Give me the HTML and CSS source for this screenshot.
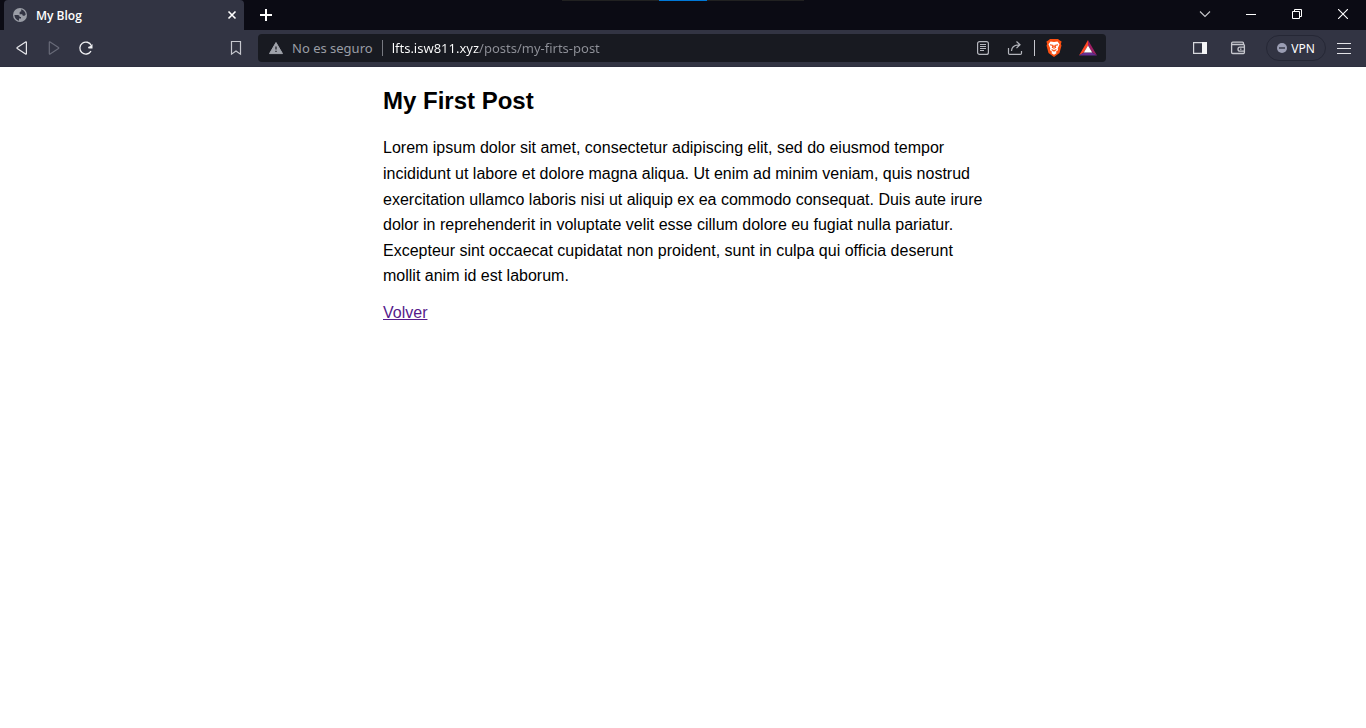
FILE: index.html
```html
<!DOCTYPE html>
<html lang="es">
<head>
<meta charset="utf-8">
<title>My Blog</title>
<link rel="stylesheet" href="styles.css">
</head>
<body>
<header class="browser">
  <div class="grip"><span class="grip-mark"></span></div>
  <div class="tabstrip">
    <div class="tab">
      <svg class="icon" width="16" height="16" viewBox="0 0 16 16"><circle cx="8" cy="8" r="7" fill="#9a9da6"/><path d="M2.400 8h3.400c1.300 0 1.900.8 1.900 1.900H9v1.600H7v2.300C4.500 13.300 2.500 11 2.400 8ZM9.200 2.300c2.500.6 4.300 2.700 4.500 5.300-.5.900-1.100 1.200-1.900 1.200-1 0-1.500-.6-1.500-1.600H7.600V5.700c0-.9.500-1.300 1.600-1.300Z" fill="#323443"/></svg>
      <span class="tab-title">My Blog</span>
      <button class="tab-close" aria-label="Cerrar pestaña"><svg width="10" height="10" viewBox="0 0 10 10"><path d="m1.500 1.500 7 7m0-7-7 7" stroke="#fff" stroke-width="1.600"/></svg></button>
    </div>
    <button class="new-tab" aria-label="Nueva pestaña"><svg width="12" height="12" viewBox="0 0 12 12"><path d="M6 0v12M0 6h12" stroke="#fff" stroke-width="2"/></svg></button>
    <div class="window-buttons">
      <button class="win" aria-label="Buscar pestañas"><svg width="12" height="12" viewBox="0 0 12 12"><path d="m1 3.500 5 5 5-5" fill="none" stroke="#c9c9cd" stroke-width="1.100"/></svg></button>
      <button class="win" aria-label="Minimizar"><svg width="10" height="10" viewBox="0 0 10 10"><path d="M0 5.500h10" stroke="#fff"/></svg></button>
      <button class="win" aria-label="Restaurar"><svg width="10" height="10" viewBox="0 0 10 10"><path d="M.5 2.500h7v7h-7zM2.500 2.500v-2h7v7h-2" fill="none" stroke="#fff"/></svg></button>
      <button class="win" aria-label="Cerrar"><svg width="10" height="10" viewBox="0 0 10 10"><path d="m0 0 10 10M10 0 0 10" stroke="#fff" stroke-width="1.100"/></svg></button>
    </div>
  </div>
  <div class="toolbar">
    <div class="nav">
      <button class="tool" aria-label="Atrás"><svg width="16" height="16" viewBox="0 0 16 16"><path d="M12.400 2.300v11.400c0 .4-.5.600-.8.400L3.200 8.500a.6.600 0 0 1 0-1l8.400-5.600c.3-.2.800 0 .8.400Z" fill="none" stroke="#e6e6ea" stroke-width="1.200"/></svg></button>
      <button class="tool" aria-label="Adelante"><svg width="16" height="16" viewBox="0 0 16 16"><path d="M3.300 2.300v11.400c0 .4.500.6.800.4l8.400-5.600a.6.600 0 0 0 0-1L4.100 1.900c-.3-.2-.8 0-.8.4Z" fill="none" stroke="#686a78" stroke-width="1.200"/></svg></button>
      <button class="tool" aria-label="Recargar"><svg width="16" height="16" viewBox="0 0 16 16"><path d="M13 11.200A6 6 0 1 1 13.300 5.500" fill="none" stroke="#f0f0f3" stroke-width="1.300"/><path d="M14.500 4v4.600h-4L10 7l2.400-1Z" fill="#f0f0f3"/></svg></button>
      <button class="tool bookmark" aria-label="Añadir a marcadores"><svg width="16" height="16" viewBox="0 0 16 16"><path d="M3.500 1.500h9v12.700L8 11l-4.500 3.200Z" fill="none" stroke="#c6c7ce" stroke-width="1.200"/></svg></button>
    </div>
    <div class="address">
      <svg class="icon" width="14" height="14" viewBox="0 0 14 14"><path d="M7 1.500 13.500 12.600H.5Z" fill="#a0a3ab" stroke="#a0a3ab" stroke-linejoin="round"/><path d="M7 5.500v3M7 9.800v1.300" stroke="#181a21" stroke-width="1.200"/></svg>
      <label class="security" for="url">No es seguro</label>
      <span class="divider"></span>
      <input class="url" id="url" type="text" value="lfts.isw811.xyz/posts/my-firts-post" spellcheck="false">
      <button class="tool" aria-label="Modo de lectura"><svg width="16" height="16" viewBox="0 0 16 16"><rect x="2.600" y="1.600" width="10.800" height="12.800" rx="2" fill="none" stroke="#b4b6bd" stroke-width="1.200"/><path d="M5 4.500h6M5 6.500h6M5 8.500h6M5 10.500h4" stroke="#b4b6bd"/></svg></button>
      <button class="tool" aria-label="Compartir"><svg width="16" height="16" viewBox="0 0 16 16"><path d="M1.500 8v5.200c0 .7.500 1.200 1.200 1.200h10.600c.7 0 1.200-.5 1.200-1.200V11M4.500 11c.2-4 2.500-6.200 8.500-6.200M9.500 1.500 13 4.800 9.500 8.100" fill="none" stroke="#b4b6bd" stroke-width="1.200"/></svg></button>
      <span class="divider light"></span>
      <button class="tool shields" aria-label="Brave Shields"><svg width="18" height="20" viewBox="0 0 18 20"><path d="m5 1h8l1.800 1.500 1.800 1-.7 2.500.6 1.500-2 7.500L9 19l-5.500-4-2-7.500L2.100 6l-.7-2.500 1.800-1Z" fill="#fb5012"/><path d="m5.500 3.500 3.500.6 3.500-.6 2 2.700-1.800 4.400.4 1.400-2.400 1.900 1 1L9 16.800 6.300 14.900l1-1L4.900 12l.4-1.400L3.500 6.200Z" fill="#fff"/><path d="m5 6.700 3 .8-.7 2.500M13 6.700l-3 .8.700 2.500M9 8v3.300M6.600 11.600 9 13l2.400-1.400" fill="none" stroke="#fb5012" stroke-width="1.100"/></svg></button>
      <button class="tool rewards" aria-label="Brave Rewards"><svg width="18" height="16" viewBox="0 0 18 16"><path d="M9 0v5.500L4.800 12.500 0 15.500Z" fill="#ff4724"/><path d="m9 0 9 15.500-4.800-3L9 5.500Z" fill="#9e1f63"/><path d="m0 15.500 4.800-3h8.400l4.800 3Z" fill="#662d91"/><path d="m9 5.500 4.200 7H4.800Z" fill="#fff"/></svg></button>
    </div>
    <div class="actions">
      <button class="tool wide" aria-label="Panel lateral"><svg width="14" height="14" viewBox="0 0 14 14"><path d="M.6 1.600h12.800v10.800H.6z" fill="none" stroke="#d7d8dd" stroke-width="1.200"/><path d="M9 1h5v12H9z" fill="#f4f4f6"/></svg></button>
      <button class="tool wide" aria-label="Cartera"><svg width="16" height="16" viewBox="0 0 16 16"><path d="M13.500 5V3.200c0-.6-.4-1-1-1H2.700c-.6 0-1.100.5-1.100 1.200 0 .6.500 1.100 1.100 1.100h10.700c.6 0 1 .4 1 1v7c0 .6-.4 1-1 1H2.700c-.6 0-1.100-.4-1.100-1V3.400M14.400 7.200H10a2 2 0 0 0 0 4h4.400M10 9.200h1.500" fill="none" stroke="#c6c7ce" stroke-width="1.300"/></svg></button>
      <button class="vpn"><svg width="10" height="10" viewBox="0 0 10 10"><circle cx="5" cy="5" r="5" fill="#9a9db3"/><path d="M2 5h6" stroke="#323443" stroke-width="1.400"/></svg>VPN</button>
      <button class="tool" aria-label="Menú"><svg width="14" height="12" viewBox="0 0 14 12"><path d="M0 1.500h14M0 6.500h14M0 11.500h14" stroke="#e2e2e6"/></svg></button>
    </div>
  </div>
</header>
<main class="post">
  <h1 class="post-title">My First Post</h1>
  <p class="post-body">Lorem ipsum dolor sit amet, consectetur adipiscing elit, sed do eiusmod tempor incididunt ut labore et dolore magna aliqua. Ut enim ad minim veniam, quis nostrud exercitation ullamco laboris nisi ut aliquip ex ea commodo consequat. Duis aute irure dolor in reprehenderit in voluptate velit esse cillum dolore eu fugiat nulla pariatur. Excepteur sint occaecat cupidatat non proident, sunt in culpa qui officia deserunt mollit anim id est laborum.</p>
  <a class="back-link" href="#">Volver</a>
</main>
</body>
</html>
```

FILE: styles.css
```css
* { box-sizing: border-box; }

body {
  margin: 0;
  background: #fff;
  color: #000;
  font-family: "Liberation Sans", Arial, sans-serif;
}

button {
  display: flex;
  align-items: center;
  justify-content: center;
  flex: none;
  padding: 0;
  border: 0;
  background: none;
  color: inherit;
  font: inherit;
}

.icon { flex: none; }

.browser {
  position: relative;
  color: #fff;
  font-family: "Noto Sans", "Open Sans", sans-serif;
}

/* Thin drag mark over the top edge of the window */
.grip {
  position: absolute;
  top: 0;
  left: 50%;
  display: flex;
  justify-content: center;
  width: 242px;
  height: 1px;
  margin-left: -121px;
  background: #212121;
}

.grip-mark {
  width: 48px;
  background: #0078d7;
}

.tabstrip {
  display: flex;
  height: 30px;
  padding-left: 4px;
  background: #0b0b14;
}

.tab {
  display: flex;
  align-items: center;
  gap: 8px;
  width: 240px;
  padding: 0 4px 0 8px;
  border-radius: 4px 4px 0 0;
  background: #323443;
}

.tab-title {
  flex: 1;
  font-family: "Open Sans", "Noto Sans", sans-serif;
  font-size: 12px;
  font-weight: 600;
}

.tab-close {
  width: 16px;
  height: 16px;
}

.new-tab { width: 44px; }

.window-buttons {
  display: flex;
  margin-left: auto;
}

.win {
  width: 46px;
  height: 28px;
}

.toolbar {
  display: grid;
  grid-template-columns: 258px 1fr 260px;
  align-items: center;
  height: 37px;
  border-bottom: 1px solid #2d2f3f;
  background: #323443;
}

.nav {
  display: flex;
  padding: 0 6px;
}

.tool {
  width: 32px;
  height: 28px;
}

.bookmark { margin-left: auto; }

.address {
  display: flex;
  align-items: center;
  height: 28px;
  padding-left: 11px;
  border-radius: 4px;
  background: #181a21;
  font-size: 13px;
}

.security {
  margin: 0 9px;
  color: #9a9da5;
  white-space: nowrap;
}

.divider {
  width: 1px;
  height: 16px;
  margin-right: 9px;
  background: #777981;
}

.divider.light {
  margin: 0 3px;
  background: #c6c7ce;
}

/* Host part of the address is bright, the path is dimmed */
.url {
  flex: 1;
  min-width: 0;
  padding: 0;
  border: 0;
  outline: 0;
  background: linear-gradient(to right, #fff 87px, #8f9199 87px);
  background-clip: text;
  -webkit-background-clip: text;
  color: transparent;
  font: inherit;
}

.rewards { width: 36px; }

.actions {
  display: flex;
  align-items: center;
  padding: 0 6px 0 75px;
}

.wide { width: 38px; }

.vpn {
  gap: 4px;
  width: 60px;
  height: 26px;
  margin: 0 2px 0 9px;
  border: 1px solid #252735;
  border-radius: 13px;
  font-size: 12px;
}

.post {
  max-width: 600px;
  margin: 15px auto 0;
  font-size: 16px;
  line-height: 1.6;
}

.post-title {
  margin: 0 0 15px;
  font-size: 24px;
}

.post-body { margin: 0 0 11px; }

.back-link { color: #551a8b; }
```
